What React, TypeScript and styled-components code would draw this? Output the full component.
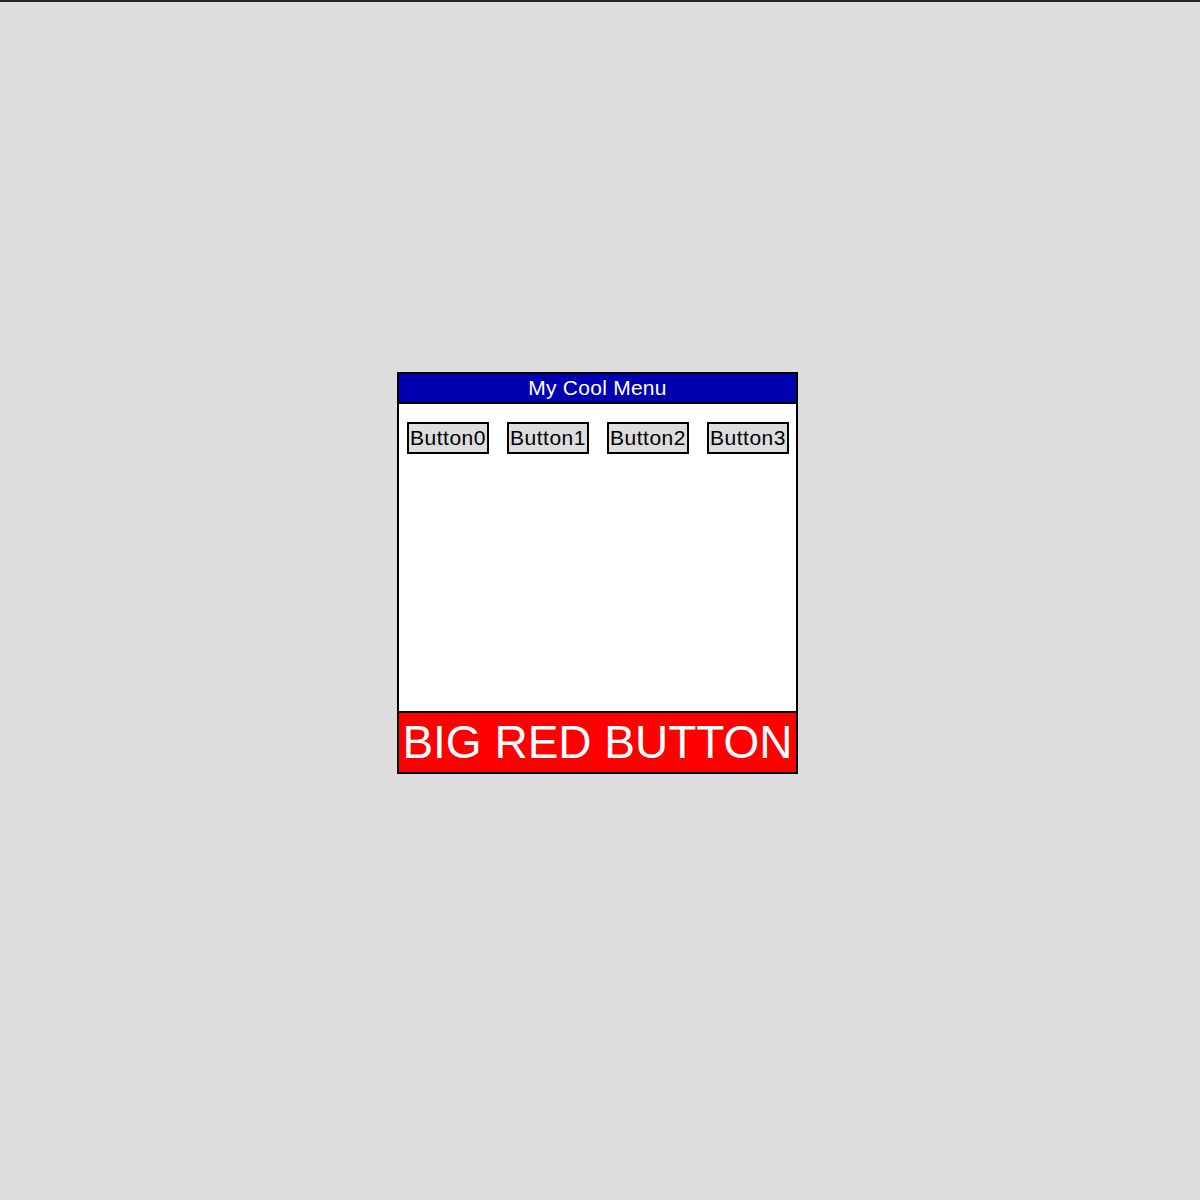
import React from "react";
import styled, { createGlobalStyle } from "styled-components";

const GlobalStyle = createGlobalStyle`
  html, body {
    margin: 0;
    padding: 0;
    background: #dddddd;
    font-family: "Liberation Sans", Arial, Helvetica, sans-serif;
  }
`;

const Page = styled.div`
  min-height: 1198px;
  border-top: 2px solid #222222;
  padding: 370px 0 0 397px;
  box-sizing: border-box;
`;

const Panel = styled.div`
  width: 401px;
  border: 2px solid #000;
  box-sizing: border-box;
  display: flex;
  flex-direction: column;
  background: #fff;
`;

const Header = styled.div`
  height: 28px;
  background: #0000b0;
  color: #fff;
  border-bottom: 2px solid #000;
  font-size: 21px;
  letter-spacing: 0.25px;
  line-height: 28px;
  text-align: center;
`;

const Body = styled.div`
  height: 307px;
  padding: 18px 0 0 8px;
  box-sizing: border-box;
`;

const ButtonRow = styled.div`
  display: grid;
  grid-template-columns: repeat(4, 100px);
`;

const MenuButton = styled.div`
  width: 82px;
  height: 32px;
  box-sizing: border-box;
  border: 2px solid #000;
  background: #dddddd;
  color: #000;
  font-size: 21px;
  letter-spacing: 0.5px;
  line-height: 28px;
  text-align: center;
  white-space: nowrap;
`;

const BigButton = styled.div`
  height: 61px;
  box-sizing: border-box;
  border-top: 2px solid #000;
  background: #ff0000;
  color: #fff;
  font-size: 46px;
  line-height: 58px;
  text-align: center;
  white-space: nowrap;
`;

const buttons = ["Button0", "Button1", "Button2", "Button3"];

export default function App() {
  return (
    <>
      <GlobalStyle />
      <Page>
        <Panel>
          <Header>My Cool Menu</Header>
          <Body>
            <ButtonRow>
              {buttons.map((b) => (
                <MenuButton key={b}>{b}</MenuButton>
              ))}
            </ButtonRow>
          </Body>
          <BigButton>BIG RED BUTTON</BigButton>
        </Panel>
      </Page>
    </>
  );
}
